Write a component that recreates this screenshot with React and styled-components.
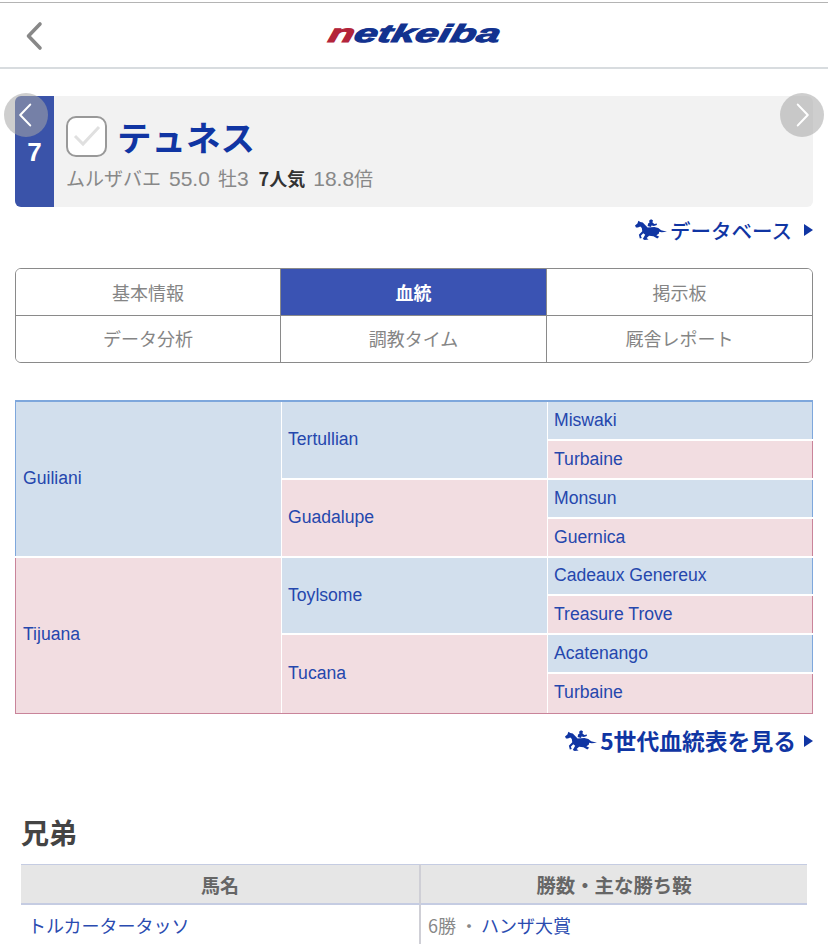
import React from "react";
import styled, { createGlobalStyle } from "styled-components";

const Global = createGlobalStyle`
  html, body { margin: 0; padding: 0; background: #fff; }
  body { font-family: "Liberation Sans", "Noto Sans CJK JP", sans-serif; }
  * { box-sizing: border-box; }
`;
const Page = styled.div`
  width: 828px; height: 944px; overflow: hidden; position: relative; background: #fff;
  padding-top: 2px;
`;
const Header = styled.header`
  height: 67px; border-top: 1px solid #b4b4b4; border-bottom: 2px solid #d8dcdf;
  display: flex; align-items: center; justify-content: center; position: relative;
`;
const BackButton = styled.div`
  position: absolute; left: 25px; top: 18px; width: 22px; height: 30px; color: #888;
`;
const Logo = styled.div`
  font-family: "Liberation Sans", sans-serif; font-weight: 700; font-style: italic;
  font-size: 25px; line-height: 1; color: #12328f; margin: -3px 0 0 2px;
  transform: scaleX(1.69) skewX(-8deg); -webkit-text-stroke: 1px currentColor;
`;
const LogoRed = styled.span` color: #b3243a; `;
const Panel = styled.section`
  margin: 27px 15px 0; height: 111px; display: flex; background: #f2f2f2;
  overflow: hidden; border-radius: 6px;
`;
const Gate = styled.div`
  width: 39px; background: #3a53a9; color: #fff; font-size: 26px; font-weight: 700;
  display: flex; align-items: center; justify-content: center; padding-top: 2px;
  font-family: "Liberation Sans", sans-serif;
`;
const PanelBody = styled.div`
  padding: 19px 0 0 12px; display: flex; flex-direction: column;
`;
const NameRow = styled.div` display: flex; align-items: center; gap: 11px; height: 42px; `;
const Check = styled.div`
  width: 41px; height: 41px; border: 2px solid #999; border-radius: 10px; background: #fff;
  display: flex; align-items: center; justify-content: center;
`;
const HorseName = styled.div`
  font-family: "Noto Sans CJK JP", sans-serif; font-size: 34.5px; font-weight: 700; color: #1035a3;
  line-height: 42px; margin: -1px 0 0 -1px;
`;
const Meta = styled.div`
  margin-top: 9px; color: #888; display: flex; align-items: baseline; line-height: 24px;
  font-family: "Noto Sans CJK JP", sans-serif; font-size: 19px;
`;
const MetaLatin = styled.span`
  font-family: "Liberation Sans", sans-serif; font-size: 21px; margin: ${p => p.$m};
`;
const MetaStrong = styled.span` font-size: 18px; font-weight: 700; color: #333; margin: 0 8px 0 10px; `;
const Circle = styled.div`
  position: absolute; top: 93px; width: 44px; height: 44px; border-radius: 50%;
  left: ${p => p.$left}px; background: rgba(165,165,165,.55); color: #fff;
  display: flex; align-items: center; justify-content: center;
  padding: ${p => p.$pad};
`;
const LinkRow = styled.div`
  display: flex; justify-content: flex-end; align-items: center; padding-right: 15px;
  height: ${p => p.$h}px; margin-top: ${p => p.$mt}px;
`;
const LinkText = styled.span`
  font-family: "Noto Sans CJK JP", sans-serif; color: #1035a3;
  font-size: ${p => p.$size}px; font-weight: ${p => p.$weight}; margin: 0 ${p => p.$gap}px 0 3px;
  line-height: 1;
`;
const Tabs = styled.nav`
  margin: 26px 15px 0; height: 95px; border: 1.5px solid #8a8a8a; border-radius: 6px;
  display: grid; grid-template-columns: 265px 266px 1fr; grid-template-rows: 47px 1fr; overflow: hidden;
`;
const Tab = styled.div`
  display: flex; align-items: center; justify-content: center; padding-bottom: ${p => (p.$bottom ? 3 : 1)}px;
  font-family: "Noto Sans CJK JP", sans-serif; font-size: 18px;
  font-weight: ${p => (p.$active ? 700 : 400)};
  color: ${p => (p.$active ? "#fff" : "#858585")};
  background: ${p => (p.$active ? "#3a53b3" : "#fff")};
  border-right: ${p => (p.$last ? "none" : "1.5px solid #8a8a8a")};
  border-bottom: ${p => (p.$bottom ? "none" : "1.5px solid #8a8a8a")};
`;
const Pedigree = styled.div`
  margin: 37px 15px 0; height: 314px; display: grid; grid-template-columns: 267px 266px 1fr;
  grid-template-rows: repeat(8, 1fr); background: #fff; border-top: 2px solid #7ea7dc;
  border-bottom: 1px solid #c9849a;
`;
const Cell = styled.div`
  grid-column: ${p => p.$col}; grid-row: ${p => p.$row} / span ${p => p.$span};
  background: ${p => (p.$m ? "#f2dde1" : "#d2dfed")};
  color: #2547ad; font-size: 17.6px; display: flex; align-items: center;
  padding: 0 0 ${p => (p.$end ? 2 : 0)}px ${p => (p.$col === 1 ? 7 : 6)}px;
  margin: 0 ${p => (p.$col === 3 ? 0 : 1)}px ${p => (p.$end ? 0 : 2)}px 0;
  border-left: ${p => (p.$col === 1 ? `1px solid ${p.$m ? "#c9849a" : "#7ea7dc"}` : "none")};
  border-right: ${p => (p.$col === 3 ? `1px solid ${p.$m ? "#c9849a" : "#7ea7dc"}` : "none")};
`;
const SectionTitle = styled.h2`
  margin: 58px 0 0 21px; font-family: "Noto Sans CJK JP", sans-serif; font-size: 28px; font-weight: 700;
  color: #444; line-height: 38px;
`;
const Table = styled.div`
  margin: 13px 21px 0; display: grid; grid-template-columns: 400px 1fr;
`;
const Th = styled.div`
  height: 41px; background: #e6e6e6; border-top: 1px solid #c5cce2; border-bottom: 2px solid #c5cce2;
  display: flex; align-items: center; justify-content: center;
  font-family: "Noto Sans CJK JP", sans-serif; font-size: ${p => (p.$first ? 19 : 19.4)}px; font-weight: 700; color: #666;
  border-right: ${p => (p.$first ? "2px solid #cfcfd6" : "none")};
`;
const Td = styled.div`
  height: 41px; display: flex; align-items: center; padding: 0 0 2px 7px; font-size: 18px;
  font-family: "Noto Sans CJK JP", sans-serif; color: #888;
  border-right: ${p => (p.$first ? "2px solid #cfcfd6" : "none")};
`;
const TextLink = styled.span` color: #2a4bb0; margin-left: ${p => p.$ml || 0}px; `;

const Chevron = ({ dir, w = 16, h = 30, sw = 3 }) => (
  <svg width={w} height={h} viewBox="0 0 16 30" fill="none" stroke="currentColor" strokeWidth={sw} strokeLinecap="round" strokeLinejoin="round">
    <path d={dir === "left" ? "M14 3 L2.5 15 L14 27" : "M2 3 L13.5 15 L2 27"} />
  </svg>
);
const HorseIcon = ({ w = 32 }) => (
  <svg width={w} height={w * 0.68} viewBox="0 0 33 22" fill="#1035a3">
    <path d="M0 6.5 L2.5 4.5 L3.5 1.5 L5.5 3 L8 3.5 L11 6.5 L13 8.5 L20 8 L24 9 L27 11.5 L33 13 L27.5 13.5 L25 13 L24.5 15 L22 16.5 L25 18 L23 20 L19 17.5 L14.5 17 L12 19.5 L14 21 L10 21.5 L8 20.5 L10.5 16 L8.5 14.5 L6 17 L7 19.5 L5 20 L4 16 L7.5 12.5 L7 9 L5.5 7.5 L3 8.5 L1 8.5 Z" />
    <path d="M13 7 L13.5 4.5 L15 3.5 L14.5 1.5 L16.5 0 L18.5 1.2 L18 3.5 L20 5 L22.5 4.5 L22.5 6 L19.5 7 L17 6.5 L16.5 8 Z" />
  </svg>
);
const Arrow = () => (
  <svg width="9" height="12" viewBox="0 0 9 12" fill="#1035a3"><path d="M0 0 L9 6 L0 12 Z" /></svg>
);

const sires = [
  ["Guiliani", 1, 1, 4, 0], ["Tijuana", 1, 5, 4, 1],
  ["Tertullian", 2, 1, 2, 0], ["Guadalupe", 2, 3, 2, 1], ["Toylsome", 2, 5, 2, 0], ["Tucana", 2, 7, 2, 1],
  ["Miswaki", 3, 1, 1, 0], ["Turbaine", 3, 2, 1, 1], ["Monsun", 3, 3, 1, 0], ["Guernica", 3, 4, 1, 1],
  ["Cadeaux Genereux", 3, 5, 1, 0], ["Treasure Trove", 3, 6, 1, 1], ["Acatenango", 3, 7, 1, 0], ["Turbaine", 3, 8, 1, 1],
];
const tabs = ["基本情報", "血統", "掲示板", "データ分析", "調教タイム", "厩舎レポート"];

export default function App() {
  return (
    <Page>
      <Global />
      <Header>
        <BackButton><Chevron dir="left" w={18} h={30} sw={3.6} /></BackButton>
        <Logo><LogoRed>n</LogoRed>etkeiba</Logo>
      </Header>
      <Panel>
        <Gate>7</Gate>
        <PanelBody>
          <NameRow>
            <Check>
              <svg width="30" height="24" viewBox="0 0 30 24" fill="none" stroke="#e0e0e0" strokeWidth="3"><path d="M3 12 L11 20 L27 3" /></svg>
            </Check>
            <HorseName>テュネス</HorseName>
          </NameRow>
          <Meta>
            <span>ムルザバエ</span>
            <MetaLatin $m="0 8px">55.0</MetaLatin>
            <span>牡</span>
            <MetaLatin $m="0">3</MetaLatin>
            <MetaStrong>7人気</MetaStrong>
            <MetaLatin $m="0">18.8</MetaLatin>
            <span>倍</span>
          </Meta>
        </PanelBody>
      </Panel>
      <Circle $left={4} $pad="0 3px 1px 0"><Chevron dir="left" w={14} h={26} sw={2.4} /></Circle>
      <Circle $left={780} $pad="0 0 1px 1px"><Chevron dir="right" w={14} h={26} sw={2.4} /></Circle>
      <LinkRow $h={24} $mt={11}>
        <HorseIcon />
        <LinkText $size={20.5} $weight={500} $gap={12}>データベース</LinkText>
        <Arrow />
      </LinkRow>
      <Tabs>
        {tabs.map((t, i) => (
          <Tab key={t} $active={i === 1} $last={i % 3 === 2} $bottom={i > 2}>{t}</Tab>
        ))}
      </Tabs>
      <Pedigree>
        {sires.map(([n, c, r, s, m]) => (
          <Cell key={`${n}${c}${r}`} $col={c} $row={r} $span={s} $m={m} $end={r + s === 9}>{n}</Cell>
        ))}
      </Pedigree>
      <LinkRow $h={28} $mt={13}>
        <HorseIcon />
        <LinkText $size={22.8} $weight={700} $gap={8}>5世代血統表を見る</LinkText>
        <Arrow />
      </LinkRow>
      <SectionTitle>兄弟</SectionTitle>
      <Table>
        <Th $first>馬名</Th>
        <Th>勝数・主な勝ち鞍</Th>
        <Td $first><TextLink>トルカータータッソ</TextLink></Td>
        <Td>6勝 ・<TextLink $ml={3}>ハンザ大賞</TextLink></Td>
      </Table>
    </Page>
  );
}
